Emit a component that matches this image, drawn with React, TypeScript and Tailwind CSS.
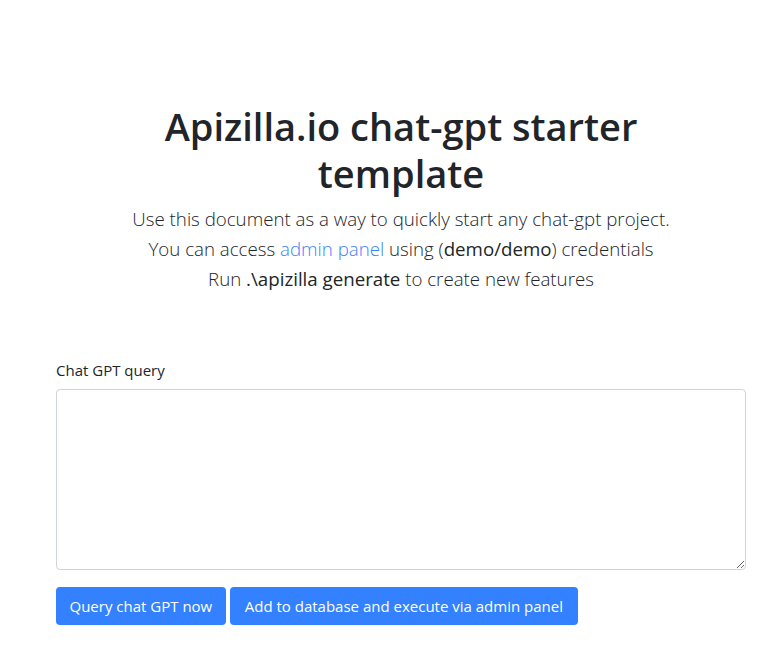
import React from "react"

export default function App() {
  return (
    <div
      className="min-h-screen bg-white text-[#212529]"
      style={{ fontFamily: '"Segoe UI", "Open Sans", "Noto Sans", sans-serif' }}
    >
      <div className="ml-[56px] w-[690px] pt-[103px]">
        {/* Header */}
        <div className="text-center">
          <h1 className="text-[38px] leading-[47px] font-semibold mb-[7px]">
            Apizilla.io chat-gpt starter
            <br />
            template
          </h1>
          <p className="text-[18.7px] leading-[30px] font-light">
            Use this document as a way to quickly start any chat-gpt project.
            <br />
            You can access{" "}
            <a href="#" className="text-[#3f7ffa]">
              admin panel
            </a>{" "}
            using (<span className="font-normal">demo/demo</span>) credentials
            <br />
            Run <span className="font-normal">.\apizilla generate</span> to create new features
          </p>
        </div>

        {/* Query form */}
        <form className="mt-[64px]">
          <label className="block text-[15px] leading-[24px] mb-[7px]">Chat GPT query</label>
          <textarea className="block w-full h-[181px] border border-[#ced4da] rounded-[4px] px-3 py-1.5 resize-y outline-none" />
          <div className="flex gap-1 mt-[17px]">
            <button
              type="button"
              className="bg-[#3381ff] text-white text-[15px] leading-[22px] px-[13.5px] py-[8px] rounded-[4px]"
            >
              Query chat GPT now
            </button>
            <button
              type="button"
              className="bg-[#3381ff] text-white text-[15px] leading-[22px] px-[15px] py-[8px] rounded-[4px]"
            >
              Add to database and execute via admin panel
            </button>
          </div>
        </form>
      </div>
    </div>
  )
}
